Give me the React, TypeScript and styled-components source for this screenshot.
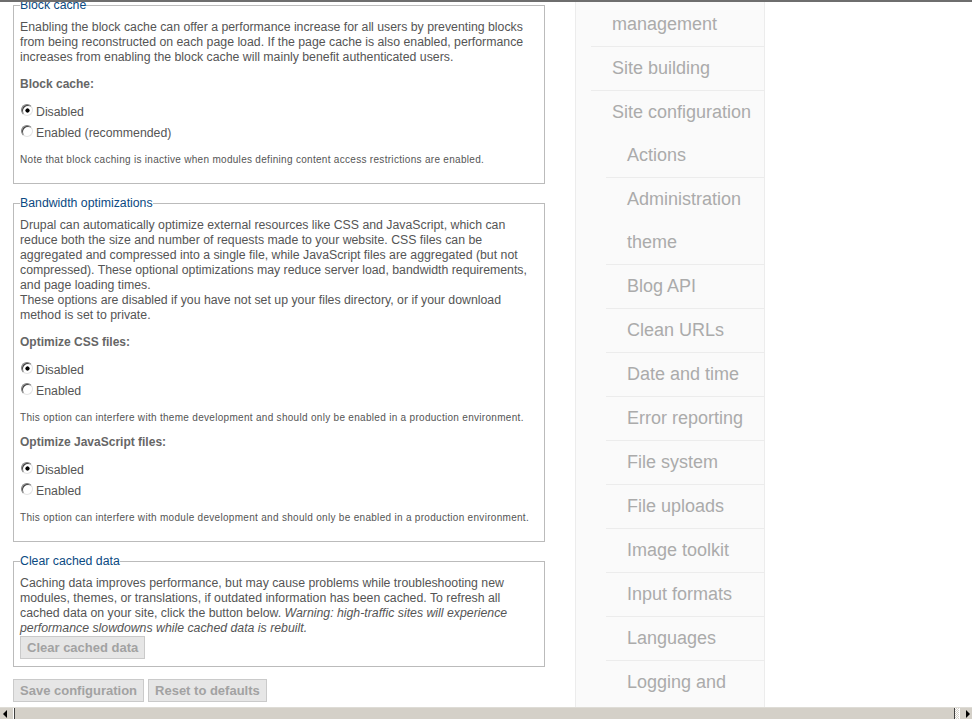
import React from "react";
import styled, { createGlobalStyle } from "styled-components";

const GlobalStyle = createGlobalStyle`
  html, body {
    margin: 0;
    padding: 0;
    background: #fff;
    overflow: hidden;
  }
  body {
    font-family: "Liberation Sans", Arial, sans-serif;
  }
`;

const Window = styled.div`
  width: 972px;
  height: 719px;
  display: flex;
  flex-direction: column;
  overflow: hidden;
`;

const TopEdge = styled.div`
  flex: none;
  height: 2px;
  background: #6e6e6e;
`;

const Viewport = styled.div`
  flex: 1;
  overflow: hidden;
`;

// page is scrolled down, so the columns start above the visible area
const Page = styled.div`
  display: flex;
  align-items: stretch;
  gap: 30px;
  padding-left: 13px;
  margin-top: -42px;
`;

const Main = styled.div`
  flex: none;
  width: 532px;
  padding-top: 38px;
`;

const Fieldset = styled.fieldset`
  margin: 0 0 12px;
  padding: 7px 6px 7px;
  border: 1px solid #bbb;
  min-width: 0;
`;

const Legend = styled.legend`
  padding: 0;
  color: #0b4a82;
  font-size: 12.3px;
  line-height: 15px;
`;

const Description = styled.div<{ $tight?: boolean }>`
  font-size: 12.3px;
  line-height: 15px;
  color: #555;
  margin-bottom: ${(p) => (p.$tight ? "0" : "11px")};
`;

const FormItem = styled.div`
  margin-bottom: 10px;

  & + & {
    margin-top: 1px;
  }
`;

const ItemLabel = styled.div`
  padding-top: 1px;
  font-size: 12px;
  line-height: 15px;
  font-weight: bold;
  color: #666;
  margin-bottom: 9px;
`;

const RadioRow = styled.label`
  display: flex;
  align-items: center;
  height: 21px;
  font-size: 12.3px;
  color: #555;
`;

const Radio = styled.input`
  appearance: none;
  -webkit-appearance: none;
  flex: none;
  width: 12px;
  height: 12px;
  margin: -4px 3px 0 1px;
  border-radius: 50%;
  border: 1px solid;
  border-color: #808080 #e4e4e4 #e4e4e4 #808080;
  box-shadow: inset 1px 1px 0 #404040;
  background: #fff;
  box-sizing: border-box;

  &:checked {
    background: radial-gradient(circle at 55% 55%, #000 0 1.8px, #fff 2.4px);
  }
`;

const Note = styled.div`
  font-size: 10px;
  letter-spacing: 0.3px;
  line-height: 13px;
  color: #555;
  margin-top: 10px;
`;

const Button = styled.button`
  height: 23px;
  margin: 0;
  padding: 0 6px;
  font-family: inherit;
  font-size: 13px;
  font-weight: bold;
  color: #a2a2a2;
  background: #e6e6e6;
  border: 1px solid #cacaca;
`;

const ButtonRow = styled.div`
  display: flex;
  gap: 4px;
`;

const Sidebar = styled.nav`
  flex: none;
  width: 188px;
  background: #fafafa;
  border-left: 1px solid #ececec;
  border-right: 1px solid #ececec;
`;

const Menu = styled.ul`
  list-style: none;
  margin: 0;
  padding: 0 0 0 15px;
`;

const MenuItem = styled.li<{ $open?: boolean }>`
  border-bottom: 1px solid ${(p) => (p.$open ? "transparent" : "#ececec")};
`;

const MenuLink = styled.a`
  display: block;
  padding-left: 21px;
  font-size: 18px;
  line-height: 43px;
  color: #ababab;
  text-decoration: none;
`;

const HScroll = styled.div`
  flex: none;
  display: flex;
  height: 11px;
  border-top: 1px solid #dedcd6;
  background: #d4d0c8;
`;

const ArrowButton = styled.div<{ $dir: "left" | "right" }>`
  flex: none;
  width: 12px;
  display: flex;
  align-items: center;
  justify-content: center;

  &::before {
    content: "";
    width: 0;
    height: 0;
    border-top: 4px solid transparent;
    border-bottom: 4px solid transparent;
    ${(p) =>
      p.$dir === "left"
        ? "border-right: 4px solid #000; margin-left: -3px;"
        : "border-left: 4px solid #000; margin-left: 3px;"}
  }
`;

const Thumb = styled.div`
  flex: 1;
  border-left: 1px solid #fff;
  box-shadow: inset 1px 0 0 #404040, inset -1px 0 0 #404040;
  margin-left: 1px;
  padding: 0 2px;
`;

const TrackRest = styled.div`
  flex: none;
  width: 4px;
  background: repeating-conic-gradient(#d4d0c8 0 25%, #fff 0 50%) 0 0 / 2px 2px;
  border-right: 1px solid #fff;
`;

type RadioGroup = {
  label: string;
  name: string;
  options: string[];
  note: string;
};

const cssGroup: RadioGroup = {
  label: "Optimize CSS files:",
  name: "css",
  options: ["Disabled", "Enabled"],
  note: "This option can interfere with theme development and should only be enabled in a production environment.",
};

const jsGroup: RadioGroup = {
  label: "Optimize JavaScript files:",
  name: "js",
  options: ["Disabled", "Enabled"],
  note: "This option can interfere with module development and should only be enabled in a production environment.",
};

const blockGroup: RadioGroup = {
  label: "Block cache:",
  name: "block",
  options: ["Disabled", "Enabled (recommended)"],
  note: "Note that block caching is inactive when modules defining content access restrictions are enabled.",
};

const RadioItem = ({ group }: { group: RadioGroup }) => (
  <FormItem>
    <ItemLabel>{group.label}</ItemLabel>
    {group.options.map((opt, i) => (
      <RadioRow key={opt}>
        <Radio type="radio" name={group.name} defaultChecked={i === 0} />
        {opt}
      </RadioRow>
    ))}
    <Note>{group.note}</Note>
  </FormItem>
);

const topLinks = ["Content management", "Site building"];
const configLinks = [
  "Actions",
  "Administration theme",
  "Blog API",
  "Clean URLs",
  "Date and time",
  "Error reporting",
  "File system",
  "File uploads",
  "Image toolkit",
  "Input formats",
  "Languages",
  "Logging and alerts",
  "Performance",
  "Site information",
];

const App = () => {
  return (
    <Window>
      <GlobalStyle />
      <TopEdge />
      <Viewport>
        <Page>
          <Main>
            <Fieldset>
              <Legend>Block cache</Legend>
              <Description>
                Enabling the block cache can offer a performance increase for all users by
                preventing blocks from being reconstructed on each page load. If the page cache
                is also enabled, performance increases from enabling the block cache will mainly
                benefit authenticated users.
              </Description>
              <RadioItem group={blockGroup} />
            </Fieldset>

            <Fieldset>
              <Legend>Bandwidth optimizations</Legend>
              <Description>
                Drupal can automatically optimize external resources like CSS and JavaScript,
                which can reduce both the size and number of requests made to your website. CSS
                files can be aggregated and compressed into a single file, while JavaScript files
                are aggregated (but not compressed). These optional optimizations may reduce
                server load, bandwidth requirements, and page loading times.
                <br />
                These options are disabled if you have not set up your files directory, or if
                your download method is set to private.
              </Description>
              <RadioItem group={cssGroup} />
              <RadioItem group={jsGroup} />
            </Fieldset>

            <Fieldset>
              <Legend>Clear cached data</Legend>
              <Description $tight>
                Caching data improves performance, but may cause problems while troubleshooting
                new modules, themes, or translations, if outdated information has been cached. To
                refresh all cached data on your site, click the button below.{" "}
                <em>
                  Warning: high-traffic sites will experience performance slowdowns while cached
                  data is rebuilt.
                </em>
              </Description>
              <Button type="button">Clear cached data</Button>
            </Fieldset>

            <ButtonRow>
              <Button type="button">Save configuration</Button>
              <Button type="button">Reset to defaults</Button>
            </ButtonRow>
          </Main>

          <Sidebar>
            <Menu>
              {topLinks.map((t) => (
                <MenuItem key={t}>
                  <MenuLink href="#">{t}</MenuLink>
                </MenuItem>
              ))}
              <MenuItem $open>
                <MenuLink href="#">Site configuration</MenuLink>
                <Menu>
                  {configLinks.map((t) => (
                    <MenuItem key={t}>
                      <MenuLink href="#">{t}</MenuLink>
                    </MenuItem>
                  ))}
                </Menu>
              </MenuItem>
            </Menu>
          </Sidebar>
        </Page>
      </Viewport>
      <HScroll>
        <ArrowButton $dir="left" />
        <Thumb />
        <TrackRest />
        <ArrowButton $dir="right" />
      </HScroll>
    </Window>
  );
};

export default App;
